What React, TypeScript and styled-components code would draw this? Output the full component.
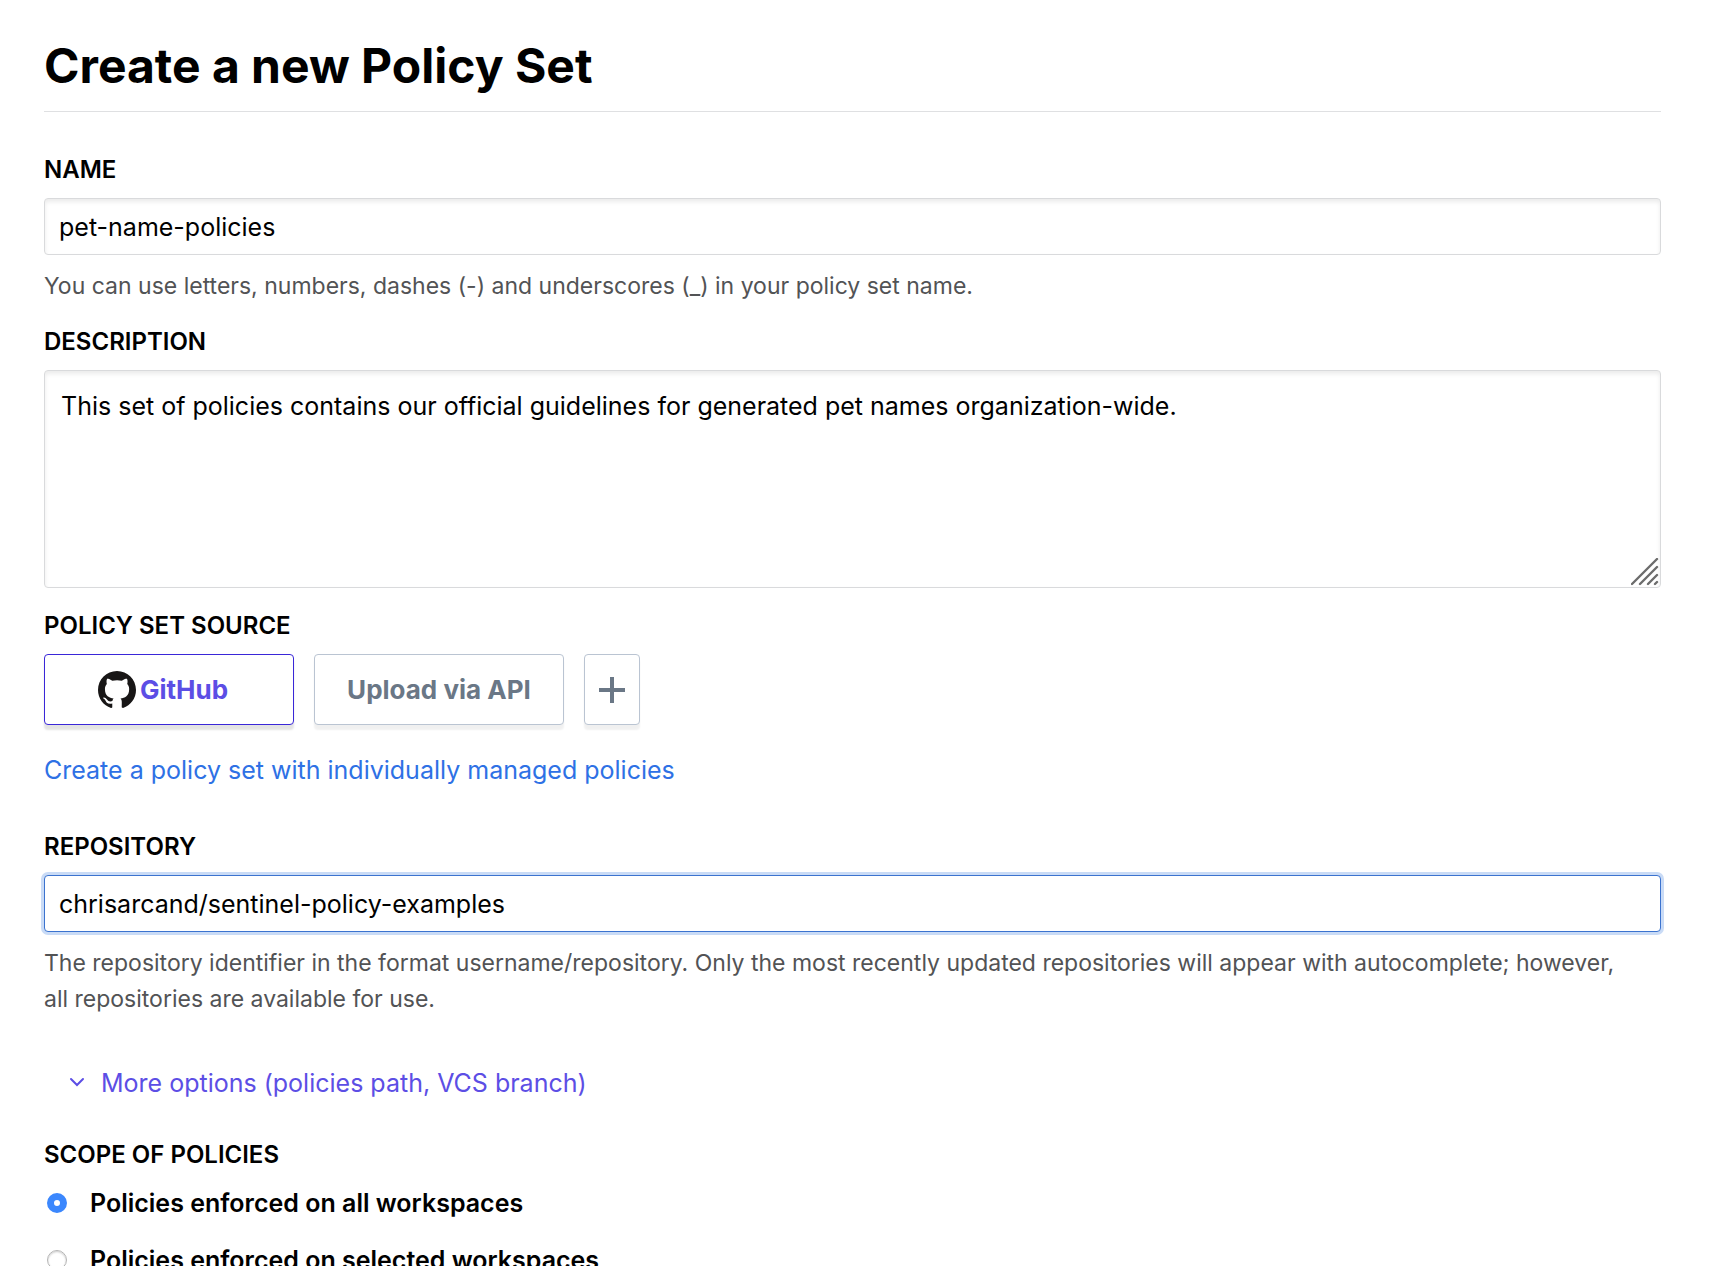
import React, { useState } from "react";
import styled, { createGlobalStyle } from "styled-components";

const GlobalStyle = createGlobalStyle`
  *, *::before, *::after { box-sizing: border-box; }
  body {
    margin: 0;
    background: #fff;
    color: #000;
    font-family: Inter, "Liberation Sans", sans-serif;
    font-size: 25px;
    line-height: 36px;
  }
`;

const Page = styled.main`
  padding: 36px 57px 0 44px;
`;

const Title = styled.h1`
  margin: 0 0 40px;
  padding-bottom: 15px;
  border-bottom: 1px solid #dfe0e2;
  font-size: 48px;
  line-height: 60px;
  font-weight: 700;
`;

const Form = styled.form`
  display: flex;
  flex-direction: column;
`;

const Field = styled.div<{ $after: number }>`
  display: flex;
  flex-direction: column;
  margin-bottom: ${(p) => p.$after}px;
`;

const Label = styled.label`
  margin-bottom: 10px;
  font-size: 24px;
  line-height: 36px;
  font-weight: 600;
  text-transform: uppercase;
`;

const controlStyle = `
  width: 100%;
  border: 1px solid #d9dadc;
  border-radius: 4px;
  background: #fff;
  box-shadow: inset 0 3px 4px rgba(0, 0, 0, 0.08);
  color: #000;
  font: inherit;
  outline: none;
`;

const TextInput = styled.input<{ $active?: boolean }>`
  ${controlStyle}
  height: 57px;
  padding: 0 14px;
  ${(p) =>
    p.$active &&
    `
    border-color: #3b73cf;
    box-shadow: 0 0 0 3px #c9dbf6;
  `}
`;

const AreaFrame = styled.div`
  position: relative;
  display: flex;
`;

const TextArea = styled.textarea`
  ${controlStyle}
  height: 218px;
  padding: 17px 16px;
  resize: none;
`;

const Grip = styled.svg`
  position: absolute;
  right: 2px;
  bottom: 2px;
`;

const Help = styled.p`
  margin: 13px 0 0;
  padding-right: 32px;
  font-size: 23px;
  color: #525355;
`;

const Sources = styled.div`
  display: flex;
  gap: 20px;
`;

const SourceButton = styled.button<{ $selected?: boolean; $compact?: boolean; $logo?: boolean }>`
  display: flex;
  align-items: center;
  justify-content: center;
  gap: 4px;
  width: ${(p) => (p.$compact ? 56 : 250)}px;
  height: 71px;
  padding: 0 ${(p) => (p.$logo ? 12 : 0)}px 0 0;
  border: 1px solid ${(p) => (p.$selected ? "#3a27d8" : "#bac4d2")};
  border-radius: 4px;
  background: #fff;
  box-shadow: 0 5px 2px rgba(0, 0, 0, ${(p) => (p.$selected ? 0.11 : 0.06)});
  color: ${(p) => (p.$selected ? "#5c4ee5" : "#6a7786")};
  font: inherit;
  font-size: 26px;
  font-weight: 700;
  cursor: pointer;
`;

const TextLink = styled.a`
  align-self: flex-start;
  margin-top: 27px;
  color: #2e71e5;
  text-decoration: none;
`;

const MoreButton = styled.button`
  display: flex;
  align-items: center;
  align-self: flex-start;
  gap: 16px;
  margin: 0 0 36px 25px;
  padding: 0;
  border: 0;
  background: none;
  color: #5c4ee5;
  font: inherit;
  cursor: pointer;
`;

const Options = styled.div`
  display: flex;
  flex-direction: column;
  gap: 21px;
  padding: 2px 3px 0;
`;

const Option = styled.label`
  display: flex;
  align-items: center;
  gap: 23px;
  font-weight: 600;
`;

const Radio = styled.input`
  appearance: none;
  width: 20px;
  height: 20px;
  margin: 0;
  border: 1px solid #b4b4b4;
  border-radius: 50%;
  background: #fff;
  box-shadow: inset 0 1px 2px rgba(0, 0, 0, 0.2);

  &:checked {
    border: 7px solid #3b87fd;
    box-shadow: none;
  }
`;

const GitHubMark = () => (
  <svg width="38" height="38" viewBox="0 0 16 16" aria-hidden="true">
    <path
      fill="#181616"
      fillRule="evenodd"
      d="M8 0C3.58 0 0 3.58 0 8c0 3.54 2.29 6.53 5.47 7.59.4.07.55-.17.55-.38 0-.19-.01-.82-.01-1.49-2.01.37-2.53-.49-2.69-.94-.09-.23-.48-.94-.82-1.13-.28-.15-.68-.52-.01-.53.63-.01 1.08.58 1.23.82.72 1.21 1.87.87 2.33.66.07-.52.28-.87.51-1.07-1.78-.2-3.64-.89-3.64-3.95 0-.87.31-1.59.82-2.15-.08-.2-.36-1.02.08-2.12 0 0 .67-.21 2.2.82.64-.18 1.32-.27 2-.27.68 0 1.36.09 2 .27 1.53-1.04 2.2-.82 2.2-.82.44 1.1.16 1.92.08 2.12.51.56.82 1.27.82 2.15 0 3.07-1.87 3.75-3.65 3.95.29.25.54.73.54 1.48 0 1.07-.01 1.93-.01 2.2 0 .21.15.46.55.38A8.013 8.013 0 0016 8c0-4.42-3.58-8-8-8z"
    />
  </svg>
);

const PlusIcon = () => (
  <svg width="26" height="26" viewBox="0 0 26 26" aria-hidden="true">
    <path d="M13 0v26M0 13h26" stroke="currentColor" strokeWidth="4" />
  </svg>
);

const ChevronIcon = () => (
  <svg width="16" height="16" viewBox="0 0 16 16" aria-hidden="true">
    <path
      d="M2 4l6 6 6-6"
      fill="none"
      stroke="currentColor"
      strokeWidth="2"
      strokeLinecap="round"
    />
  </svg>
);

const ResizeGrip = () => (
  <Grip width="28" height="28" viewBox="0 0 28 28" aria-hidden="true">
    <path
      d="M1 26L26 1M9 26L26 9M17 26L26 17M24 26L26 24"
      stroke="#6c6c6c"
      strokeWidth="2.4"
      strokeLinecap="round"
    />
  </Grip>
);

const scopes = [
  { id: "all", text: "Policies enforced on all workspaces" },
  { id: "selected", text: "Policies enforced on selected workspaces" },
];

export default function App() {
  const [source, setSource] = useState("github");
  const [scope, setScope] = useState("all");

  return (
    <>
      <GlobalStyle />
      <Page>
        <Title>Create a new Policy Set</Title>
        <Form>
          <Field $after={20}>
            <Label htmlFor="name">Name</Label>
            <TextInput id="name" defaultValue="pet-name-policies" />
            <Help>
              You can use letters, numbers, dashes (-) and underscores (_) in
              your policy set name.
            </Help>
          </Field>

          <Field $after={20}>
            <Label htmlFor="description">Description</Label>
            <AreaFrame>
              <TextArea
                id="description"
                defaultValue="This set of policies contains our official guidelines for generated pet names organization-wide."
              />
              <ResizeGrip />
            </AreaFrame>
          </Field>

          <Field $after={41} role="group" aria-labelledby="source">
            <Label as="span" id="source">
              Policy Set Source
            </Label>
            <Sources>
              <SourceButton
                type="button"
                $logo
                $selected={source === "github"}
                onClick={() => setSource("github")}
              >
                <GitHubMark />
                GitHub
              </SourceButton>
              <SourceButton
                type="button"
                $selected={source === "api"}
                onClick={() => setSource("api")}
              >
                Upload via API
              </SourceButton>
              <SourceButton type="button" $compact aria-label="Add source">
                <PlusIcon />
              </SourceButton>
            </Sources>
            <TextLink href="#individual">
              Create a policy set with individually managed policies
            </TextLink>
          </Field>

          <Field $after={48}>
            <Label htmlFor="repository">Repository</Label>
            <TextInput
              id="repository"
              $active
              defaultValue="chrisarcand/sentinel-policy-examples"
            />
            <Help>
              The repository identifier in the format username/repository. Only
              the most recently updated repositories will appear with
              autocomplete; however, all repositories are available for use.
            </Help>
          </Field>

          <MoreButton type="button">
            <ChevronIcon />
            More options (policies path, VCS branch)
          </MoreButton>

          <Field $after={0} role="radiogroup" aria-labelledby="scope">
            <Label as="span" id="scope">
              Scope of Policies
            </Label>
            <Options>
              {scopes.map((s) => (
                <Option key={s.id}>
                  <Radio
                    type="radio"
                    name="scope"
                    checked={scope === s.id}
                    onChange={() => setScope(s.id)}
                  />
                  {s.text}
                </Option>
              ))}
            </Options>
          </Field>
        </Form>
      </Page>
    </>
  );
}
